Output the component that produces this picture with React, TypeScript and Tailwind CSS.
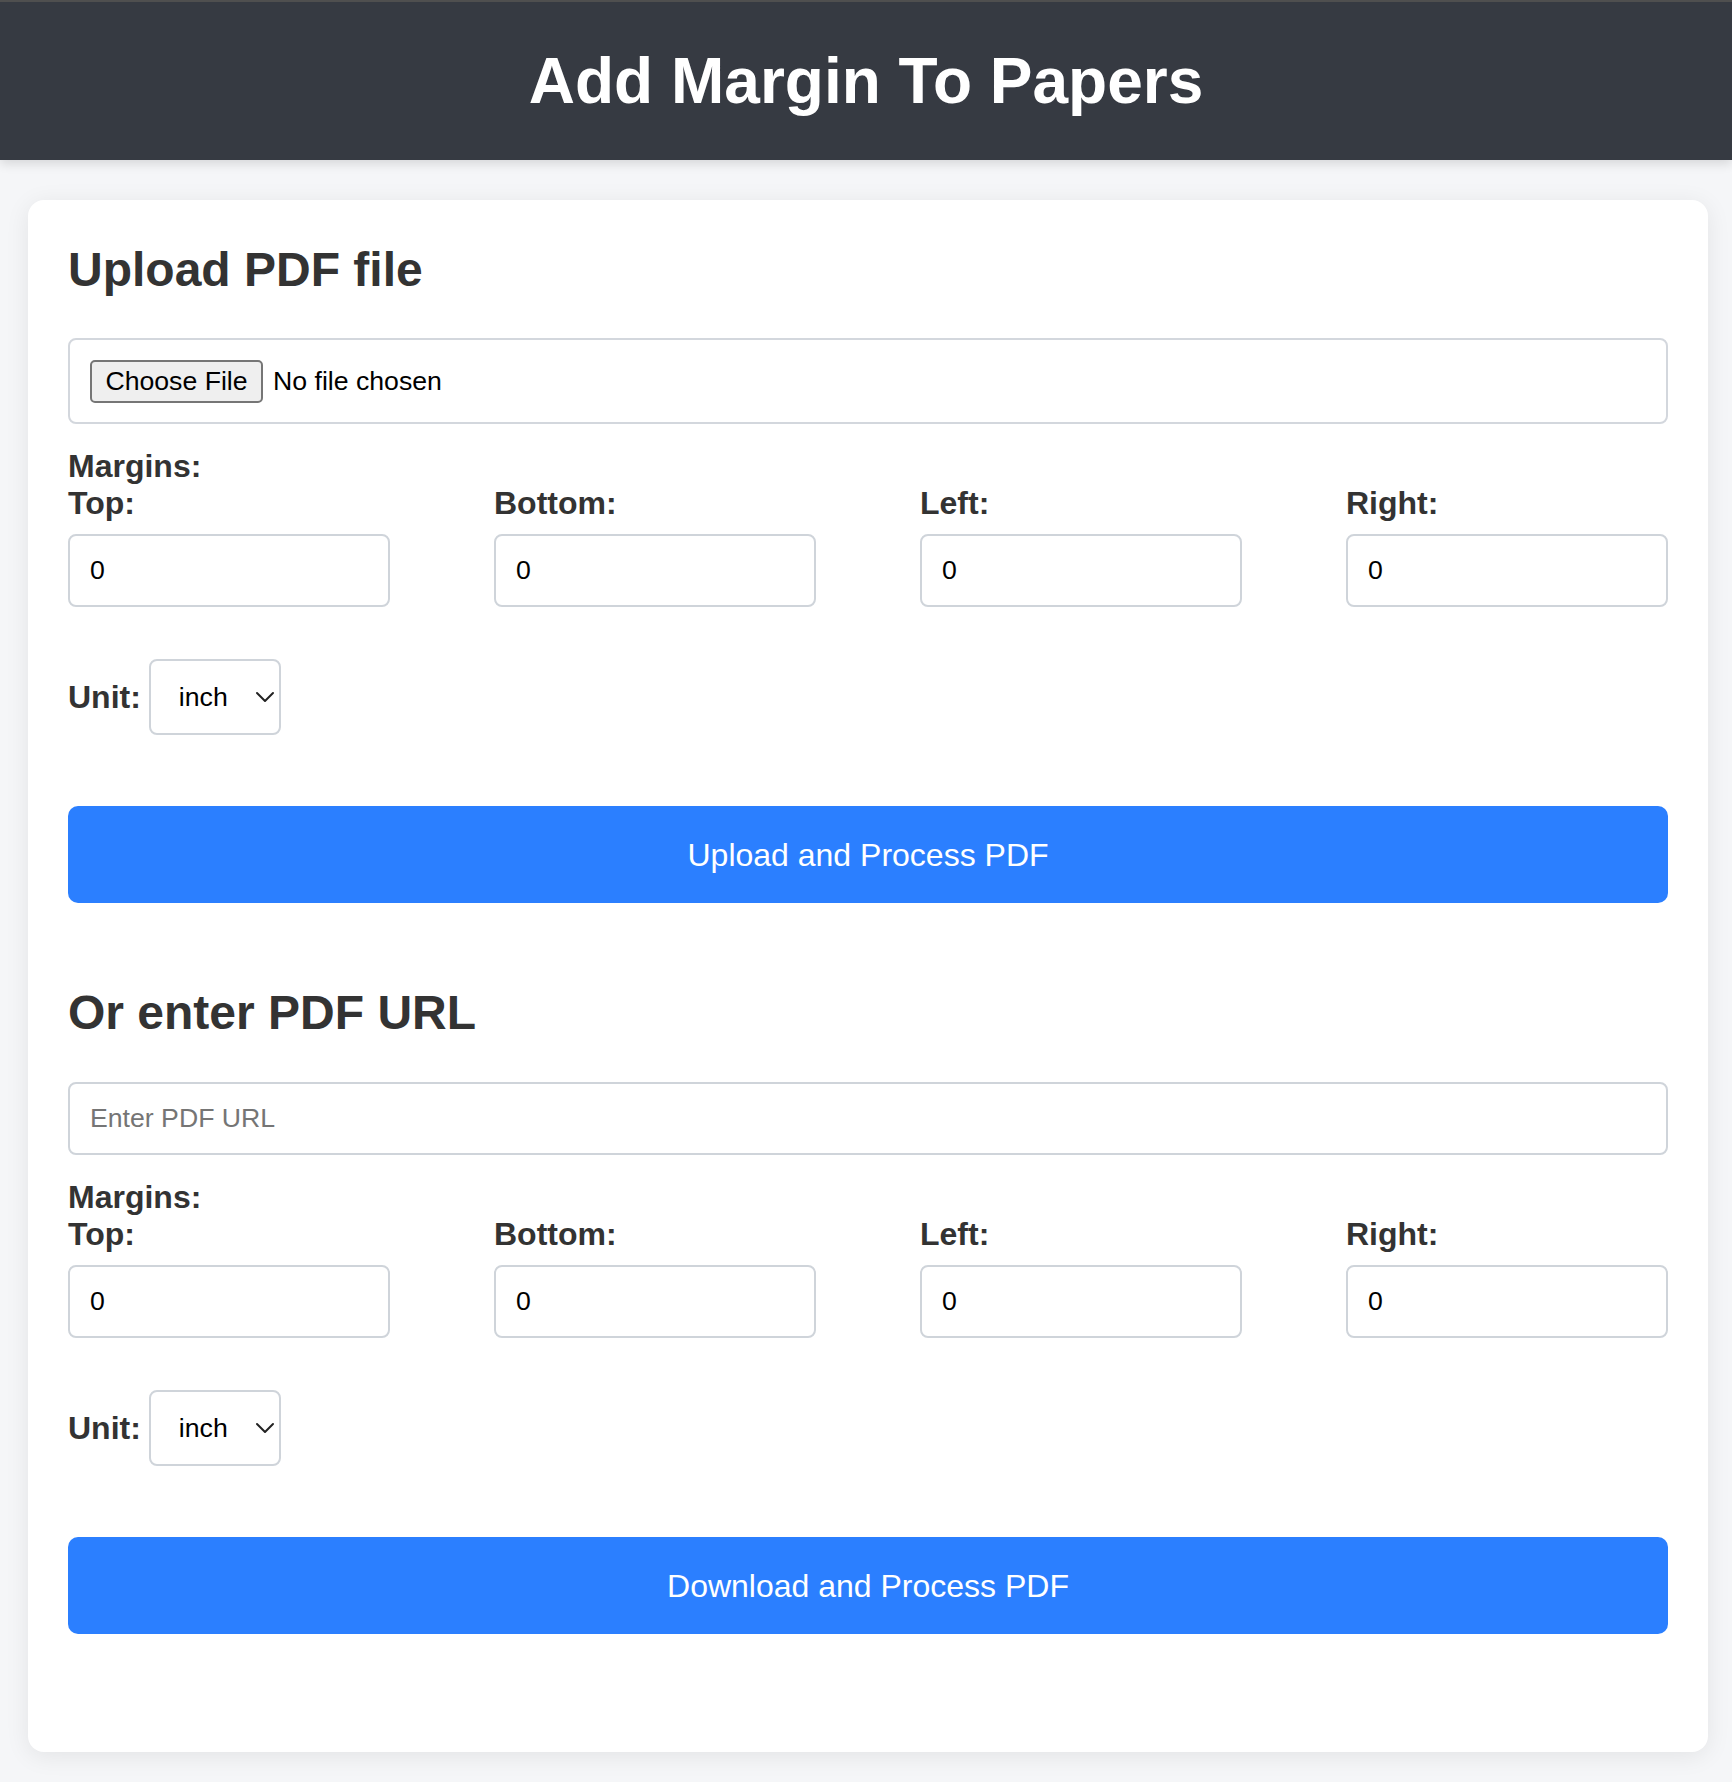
import { ChevronDown } from 'lucide-react';

const sides = ['Top', 'Bottom', 'Left', 'Right'];

function MarginFields() {
  return (
    <>
      <p className="mt-[24px] text-[32px] leading-[37px] font-bold">Margins:</p>
      <div className="grid grid-cols-4 gap-x-[104px]">
        {sides.map((side) => (
          <div key={side} className="flex flex-col">
            <label className="text-[32px] leading-[37px] font-bold">{side}:</label>
            <input
              type="text"
              defaultValue="0"
              className="mt-[12px] h-[73px] w-full rounded-[8px] border-2 border-[#cfd4da] bg-white px-[20px] text-[26.67px] text-black outline-none"
            />
          </div>
        ))}
      </div>

      <div className="mt-[52px] flex items-center gap-[8px]">
        <span className="text-[32px] leading-[37px] font-bold">Unit:</span>
        <div className="relative">
          <select className="h-[76px] w-[132px] appearance-none rounded-[8px] border-2 border-[#cfd4da] bg-white pl-[28px] pr-[40px] text-[26.67px] text-black outline-none">
            <option>inch</option>
            <option>cm</option>
            <option>mm</option>
          </select>
          {/* chevron sits over the select */}
          <ChevronDown
            size={32}
            strokeWidth={1.5}
            className="pointer-events-none absolute right-0 top-1/2 -translate-y-1/2 text-[#222]"
          />
        </div>
      </div>
    </>
  );
}

function SubmitButton({ label }: { label: string }) {
  return (
    <button className="mt-[71px] flex h-[97px] w-full items-center justify-center rounded-[10px] bg-[#2b7fff] text-[32px] text-white">
      {label}
    </button>
  );
}

export default function App() {
  return (
    <div className="min-h-screen bg-[#f5f6f8] pb-[28px] font-['Liberation_Sans',Arial,sans-serif] text-[#333]">
      <header className="flex h-[160px] items-center justify-center border-t-2 border-[#4f4f4f] bg-[#363a42] shadow-[0_4px_10px_rgba(0,0,0,0.12)]">
        <h1 className="text-[64px] leading-[74px] font-bold text-white">Add Margin To Papers</h1>
      </header>

      <main className="ml-[28px] mr-[24px] mt-[40px] rounded-[16px] bg-white px-[40px] pt-[42px] pb-[118px] shadow-[0_4px_24px_rgba(0,0,0,0.08)]">
        {/* Upload section */}
        <h2 className="text-[48px] leading-[56px] font-bold">Upload PDF file</h2>
        <div className="mt-[40px] flex h-[86px] items-center gap-[10px] rounded-[8px] border-2 border-[#d3d7dd] px-[20px]">
          <span className="flex h-[43px] w-[173px] items-center justify-center rounded-[5px] border-2 border-[#767676] bg-[#efefef] text-[26.67px] text-black">
            Choose File
          </span>
          <span className="text-[26.67px] text-black">No file chosen</span>
        </div>
        <MarginFields />
        <SubmitButton label="Upload and Process PDF" />

        {/* URL section */}
        <h2 className="mt-[82px] text-[48px] leading-[56px] font-bold">Or enter PDF URL</h2>
        <input
          type="text"
          placeholder="Enter PDF URL"
          className="mt-[41px] h-[73px] w-full rounded-[8px] border-2 border-[#cfd4da] px-[20px] text-[26.67px] text-black outline-none placeholder:text-[#757575]"
        />
        <MarginFields />
        <SubmitButton label="Download and Process PDF" />
      </main>
    </div>
  );
}
